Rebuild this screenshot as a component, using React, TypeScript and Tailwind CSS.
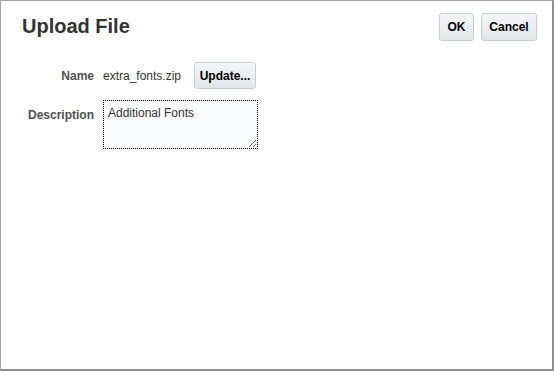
const btn =
  "rounded-[3px] border border-[#c4ced7] bg-gradient-to-b from-[#f4f6f8] to-[#e3e7ea] text-[12px] font-bold text-black";

export default function App() {
  return (
    <div className="h-[371px] w-[554px] bg-white font-['Liberation_Sans',Arial,sans-serif]">
      <div className="flex h-full w-full flex-col border-t border-l border-[#a3a3a3] border-r-2 border-b-2 border-r-[#8a8f94] border-b-[#8a8f94]">
        <div className="flex items-start justify-between pl-[21px] pr-[15px] pt-[12px]">
          <h1 className="pt-[1px] text-[20px] font-bold leading-[24px] text-[#333]">Upload File</h1>
          <div className="flex gap-[7px]">
            <button className={`${btn} h-[28px] w-[35px]`}>OK</button>
            <button className={`${btn} h-[28px] w-[56px]`}>Cancel</button>
          </div>
        </div>

        <div className="mt-[21px] grid grid-cols-[93px_auto] items-start gap-x-[9px] gap-y-[11px]">
          <div className="flex h-[27px] items-center justify-end text-[12px] font-bold text-[#4f4f4f]">Name</div>
          <div className="flex items-center gap-[13px]">
            <span className="text-[12px] text-[#333]">extra_fonts.zip</span>
            <button className={`${btn} h-[27px] w-[62px]`}>Update...</button>
          </div>

          <div className="pt-[6px] text-right text-[12px] font-bold text-[#4f4f4f]">Description</div>
          <textarea
            readOnly
            defaultValue="Additional Fonts"
            className="h-[49px] w-[155px] border border-dotted border-black bg-[#fbfcfe] px-[4px] pt-[5px] text-[12px] leading-[15px] text-[#333] outline-none"
          />
        </div>
      </div>
    </div>
  );
}
